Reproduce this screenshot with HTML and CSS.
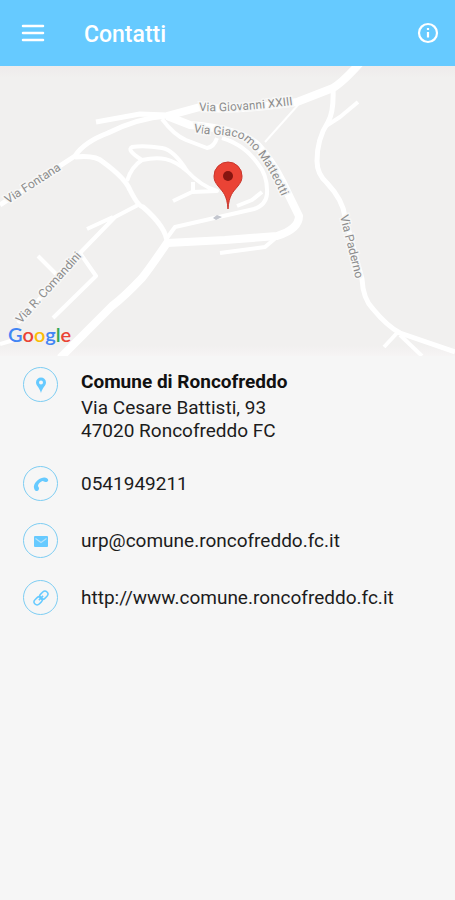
FILE: index.html
```html
<!DOCTYPE html>
<html lang="it">
<head>
  <meta charset="UTF-8" />
  <meta name="viewport" content="width=device-width, initial-scale=1.0"/>
  <title>Contatti</title>
  <link rel="stylesheet" href="styles.css">
</head>
<body>
  <header class="toolbar">
    <button type="button" class="icon-button" aria-label="Menu">
      <svg width="24" height="24" viewBox="0 0 24 24">
        <path d="M2 5h20M2 12h20M2 19h20" fill="none" stroke="currentColor" stroke-width="2.5" stroke-linecap="round"/>
      </svg>
    </button>
    <h1>Contatti</h1>
    <button type="button" class="icon-button" aria-label="Info">
      <svg width="24" height="24" viewBox="0 0 24 24">
        <circle cx="12" cy="12" r="9" fill="none" stroke="currentColor" stroke-width="2.2"/>
        <path d="M12 11v5.500M12 7v2" fill="none" stroke="currentColor" stroke-width="2.200"/>
      </svg>
    </button>
  </header>

  <main>
    <svg class="map" viewBox="0 0 455 290" preserveAspectRatio="xMidYMid slice" role="img" aria-label="Mappa">
      <defs>
        <path id="giovanni" d="M199 45C230 46 262 43 293 39"/>
        <path id="giacomo" d="M193 66C216 71 234 66 247 77C261 89 271 107 281 129L288 145"/>
      </defs>

      <!-- side streets -->
      <g class="street">
        <path d="M127 115Q131 101 142 94C160 90 172 92 187 105Q201 120 217 125L192 126L173 135M193 126V116"/>
        <path d="M142 94Q126 84 132 81Q144 79 162 82Q174 84 187 105"/>
        <path d="M162 53Q174 69 186 74L207 82Q214 81 217 72"/>
        <path d="M222 72Q245 79 258 98Q268 110 267 128Q266 139 254 143L175 161L167 172"/>
        <path d="M262 126L252 134L237 140"/>
        <path d="M138 139L115 151L80 187L96 210L53 252M87 163L113 151M38 190L56 208M80 187L18 257M0 278L14 274"/>
        <path d="M278 170L265 181L220 187"/>
        <path d="M326 60L340 51L358 36M397 267L384 281M400 269L422 290"/>
        <path class="thin" d="M298 39L265 76"/>
      </g>

      <!-- main roads -->
      <g class="road">
        <path d="M0 139L75 90Q84 76 108 67Q138 52 167 50"/>
        <path d="M96 56L140 48L167 49"/>
        <path d="M75 91Q96 89 103 96Q125 112 130 124Q138 140 143 141Q167 162 167 177"/>
        <path d="M333 22Q334 46 328 56Q317 73 317 95Q317 108 327 117Q343 134 345 151L362 213Q363 233 373 243Q387 260 400 267L455 286"/>
      </g>
      <g class="main-road">
        <path d="M360 -3Q343 16 333 22L297 36Q230 46 200 41L167 50"/>
        <path d="M167 50L190 59Q240 63 258 80Q271 94 282 115Q291 134 299 150Q299 163 277 170L225 174L167 177Q150 202 142 212Q124 231 112 240L60 292"/>
      </g>

      <g class="label">
        <text><textPath href="#giovanni">Via Giovanni XXIII</textPath></text>
        <text><textPath href="#giacomo">Via Giacomo Matteotti</textPath></text>
        <text transform="translate(8 138) rotate(-33)">Via Fontana</text>
        <text transform="translate(21 258) rotate(-48)">Via R. Comandini</text>
        <text transform="translate(340 150) rotate(76)">Via Paderno</text>
      </g>

      <!-- poi next to the pin -->
      <path d="M213 152L217 149L222 151L216 154Z" fill="#c3c6ce"/>

      <!-- pin -->
      <path d="M228 143C227 129 223 126 218 120C215 116 214 114 214 110A14 14 0 0 1 242 110C242 114 241 116 238 120C233 126 229 129 228 143Z" fill="#ea4335" stroke="#c9352b"/>
      <circle cx="228" cy="110" r="5" fill="#861510"/>

      <text class="brand" x="8" y="276"><tspan fill="#4285f4">G</tspan><tspan fill="#ea4335">o</tspan><tspan fill="#fbbc05">o</tspan><tspan fill="#4285f4">g</tspan><tspan fill="#34a853">l</tspan><tspan fill="#ea4335">e</tspan></text>
    </svg>

    <ul class="contacts">
      <li>
        <span class="badge">
          <svg width="18" height="18" viewBox="0 0 18 18">
            <path fill="currentColor" fill-rule="evenodd" d="M9 1.500A5 5 0 0 1 14 6.500C14 9.500 10.500 11.500 9 17C7.500 11.500 4 9.500 4 6.500A5 5 0 0 1 9 1.500ZM9 4.500A2 2 0 1 0 9 8.500A2 2 0 1 0 9 4.500Z"/>
          </svg>
        </span>
        <address>
          <strong>Comune di Roncofreddo</strong>
          Via Cesare Battisti, 93<br>
          47020 Roncofreddo FC
        </address>
      </li>
      <li>
        <span class="badge">
          <svg width="18" height="18" viewBox="0 0 18 18">
            <path fill="currentColor" d="M2 13C1 9 6 3 12 2.500C14 2.300 16 3.500 16.200 5C16.300 6.500 15 7 13.500 7C12 7 11.500 5.800 10.500 6C8.500 6.500 6.500 8.500 6 10.500C5.800 11.500 7 12 7 13.300C7 15 6 16.300 4.500 16C3 15.800 2.300 14.500 2 13Z"/>
          </svg>
        </span>
        <a href="tel:0541949211">0541949211</a>
      </li>
      <li>
        <span class="badge">
          <svg width="18" height="18" viewBox="0 0 18 18">
            <rect x="2" y="4" width="14" height="11" rx="1" fill="currentColor"/>
            <path d="M3.500 6.500L9 10.500L14.500 6.500" fill="none" stroke="#b5e3fb" stroke-width="1.200"/>
          </svg>
        </span>
        <a href="mailto:urp@comune.roncofreddo.fc.it">urp@comune.roncofreddo.fc.it</a>
      </li>
      <li>
        <span class="badge">
          <svg width="18" height="18" viewBox="0 0 18 18">
            <g transform="rotate(-45 9 9)" fill="none" stroke="currentColor" stroke-width="1.500">
              <rect x="0.500" y="6" width="9" height="6" rx="3"/>
              <rect x="8.500" y="6" width="9" height="6" rx="3"/>
              <path d="M6 9h6"/>
            </g>
          </svg>
        </span>
        <a href="http://www.comune.roncofreddo.fc.it">http://www.comune.roncofreddo.fc.it</a>
      </li>
    </ul>
  </main>
</body>
</html>
```
FILE: styles.css
```css
body {
  margin: 0;
  background: #f6f6f6;
  color: #1c1c1c;
  font-family: Roboto, "Liberation Sans", sans-serif;
  font-size: 19px;
  line-height: 23px;
}
.toolbar {
  display: flex;
  align-items: center;
  height: 66px;
  padding: 0 15px 0 21px;
  background: #66caff;
  color: #fff;
}
h1 {
  flex: 1;
  margin: 0 0 0 39px;
  padding-top: 3px;
  font-size: 23px;
  font-weight: 500;
  line-height: 32px;
}
.icon-button {
  display: flex;
  padding: 0;
  border: none;
  background: none;
  color: #fff;
  cursor: pointer;
}

/* map */
.map {
  display: block;
  width: 100%;
  height: 290px;
  background: linear-gradient(#eeebeb, #f1f0ef 12px, #f1f0ef 280px, #f6f4f4);
}
.street,
.road,
.main-road {
  fill: none;
  stroke: #fff;
  stroke-linejoin: round;
}
.street { stroke-width: 4px; }
.street .thin { stroke-width: 2px; }
.road { stroke-width: 5px; }
.main-road { stroke-width: 8px; }
.label {
  fill: #8c8c8c;
  stroke: #f7f7f6;
  stroke-width: 3px;
  paint-order: stroke;
  font-size: 12px;
}
.brand {
  font-family: Lato, sans-serif;
  font-size: 20px;
  font-weight: 600;
}

/* contact rows */
.contacts {
  display: flex;
  flex-direction: column;
  gap: 22px;
  margin: 0;
  padding: 11px 23px;
  list-style: none;
}
.contacts li {
  display: flex;
  align-items: flex-start;
  gap: 23px;
}
.badge {
  display: flex;
  flex: none;
  align-items: center;
  justify-content: center;
  box-sizing: border-box;
  width: 35px;
  height: 35px;
  border: 1px solid #7dcdf3;
  border-radius: 50%;
  color: #66caff;
}
address {
  padding: 3px 0 2px;
  font-style: normal;
}
address strong {
  display: block;
  margin-bottom: 3px;
  color: #111;
}
.contacts a {
  line-height: 35px;
  color: inherit;
  text-decoration: none;
}
```
